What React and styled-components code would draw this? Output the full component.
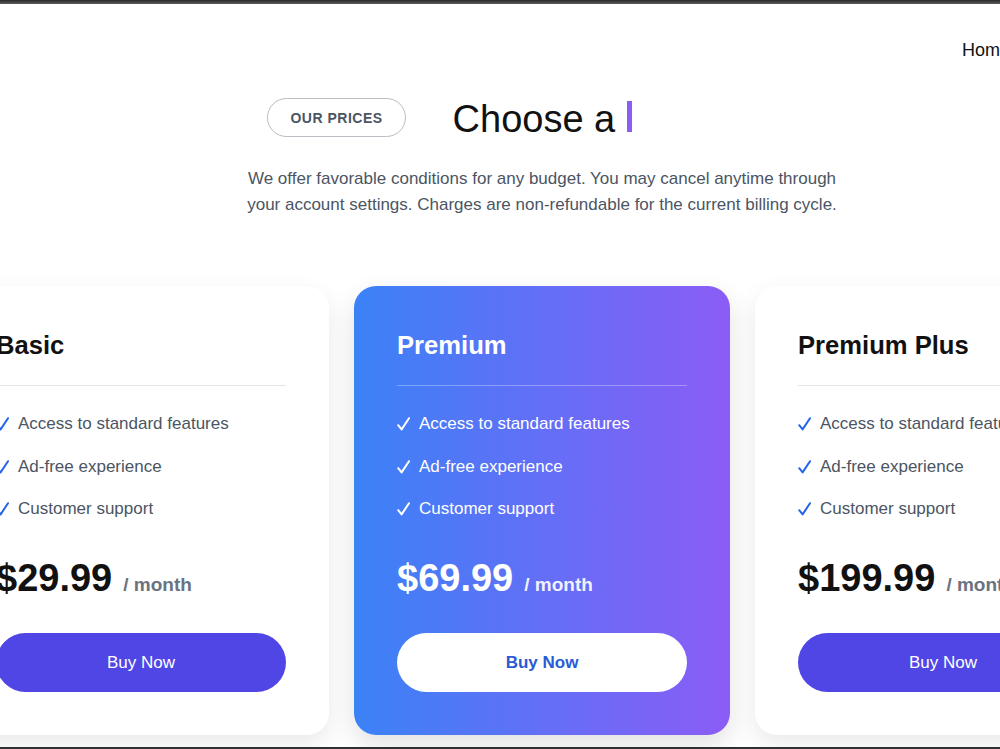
import styled, { createGlobalStyle } from "styled-components";

const GlobalStyle = createGlobalStyle`
    body {
        margin: 0;
        background: #ffffff;
        overflow: hidden;
        font-family: "Liberation Sans", Arial, sans-serif;
    }
`;

const plans = [
    { name: "Basic", price: "$29.99" },
    { name: "Premium", price: "$69.99", featured: true },
    { name: "Premium Plus", price: "$199.99" },
];

const features = ["Access to standard features", "Ad-free experience", "Customer support"];

function CheckMark() {
    return (
        <svg width="13" height="14" viewBox="0 0 13 14" fill="none">
            <path d="M1.2 8.2 L4.6 12.4 L12 1.2" stroke="currentColor" strokeWidth="2" strokeLinecap="round" strokeLinejoin="round" />
        </svg>
    );
}

export default function App() {
    return (
        <>
            <GlobalStyle />
            <Page>
                <TopEdge />
                <Stage>
                    <Header>
                        <Nav>
                            <NavLink>Home</NavLink>
                            <NavLink>Pricing</NavLink>
                            <NavLink>Contact</NavLink>
                        </Nav>
                    </Header>

                    <TitleRow>
                        <Badge>OUR PRICES</Badge>
                        <Heading>
                            {"Choose a "}
                            <Cursor />
                        </Heading>
                    </TitleRow>
                    <Lead>
                        We offer favorable conditions for any budget. You may cancel anytime through
                        your account settings. Charges are non-refundable for the current billing cycle.
                    </Lead>

                    <Cards>
                        {plans.map((plan) => (
                            <Card key={plan.name} $featured={plan.featured}>
                                <PlanName>{plan.name}</PlanName>
                                <Divider $featured={plan.featured} />
                                <Features>
                                    {features.map((f) => (
                                        <Feature key={f} $featured={plan.featured}>
                                            <Check $featured={plan.featured}>
                                                <CheckMark />
                                            </Check>
                                            {f}
                                        </Feature>
                                    ))}
                                </Features>
                                <PriceRow>
                                    <Price>{plan.price}</Price>
                                    <Period $featured={plan.featured}>/ month</Period>
                                </PriceRow>
                                <BuyButton $featured={plan.featured}>Buy Now</BuyButton>
                            </Card>
                        ))}
                    </Cards>
                </Stage>
                <BottomEdge />
            </Page>
        </>
    );
}

const Page = styled.div`
    width: 100vw;
    height: 100vh;
    overflow: hidden;
    display: flex;
    flex-direction: column;
`;

const TopEdge = styled.div`
    height: 4px;
    flex-shrink: 0;
    background: linear-gradient(#2a2a2a, #5a5a5a);
`;

const BottomEdge = styled.div`
    height: 2px;
    flex-shrink: 0;
    background: #2f3033;
`;

const Stage = styled.div`
    width: 1084px;
    flex: 1;
    display: flex;
    flex-direction: column;
    align-items: center;
`;

const Header = styled.header`
    align-self: stretch;
    padding: 36px 0 0 962px;
    height: 20px;
`;

const Nav = styled.nav`
    display: flex;
    gap: 32px;
    white-space: nowrap;
`;

const NavLink = styled.a`
    font-size: 18px;
    line-height: 20px;
    color: #111111;
`;

const TitleRow = styled.div`
    margin-top: 33px;
    display: flex;
    align-items: center;
    gap: 47px;
`;

const Badge = styled.div`
    height: 37px;
    padding: 0 22px;
    border: 1px solid #b9bcc2;
    border-radius: 999px;
    display: flex;
    align-items: center;
    font-size: 14px;
    font-weight: 700;
    letter-spacing: 0.5px;
    color: #4b5563;
`;

const Heading = styled.h1`
    width: 364px;
    margin: 3px 0 0;
    font-size: 38px;
    line-height: 46px;
    font-weight: 400;
    color: #111111;
    white-space: pre;
    display: flex;
    align-items: center;
`;

const Cursor = styled.span`
    width: 5px;
    height: 31px;
    margin-left: 1px;
    margin-top: -6px;
    background: #8b5cf6;
`;

const Lead = styled.p`
    width: 600px;
    margin: 24px 0 0;
    text-align: center;
    font-size: 17px;
    line-height: 26px;
    color: #4b5563;
`;

const Cards = styled.div`
    margin-top: 68px;
    align-self: stretch;
    display: flex;
    justify-content: center;
    gap: 25px;
`;

const Card = styled.div`
    flex-shrink: 0;
    width: 376px;
    box-sizing: border-box;
    padding: 43px;
    border-radius: 22px;
    background: ${(p) => (p.$featured ? "linear-gradient(90deg, #3b82f6, #8b5cf6)" : "#ffffff")};
    color: ${(p) => (p.$featured ? "#ffffff" : "#111111")};
    box-shadow: 0 10px 26px rgba(0, 0, 0, ${(p) => (p.$featured ? 0.12 : 0.09)});
`;

const PlanName = styled.h3`
    margin: 1px 0 0;
    font-size: 25.6px;
    line-height: 31px;
    font-weight: 700;
`;

const Divider = styled.div`
    height: 1px;
    margin-top: 24px;
    background: ${(p) => (p.$featured ? "rgba(255, 255, 255, 0.3)" : "#e2e4e8")};
`;

const Features = styled.ul`
    list-style: none;
    margin: 26px 0 0;
    padding: 0;
    display: flex;
    flex-direction: column;
    gap: 18.5px;
`;

const Feature = styled.li`
    display: flex;
    align-items: center;
    font-size: 17px;
    line-height: 24px;
    color: ${(p) => (p.$featured ? "#ffffff" : "#4b5563")};
`;

const Check = styled.span`
    display: flex;
    width: 13px;
    margin-right: 9px;
    color: ${(p) => (p.$featured ? "#ffffff" : "#2563eb")};
`;

const PriceRow = styled.div`
    margin-top: 34px;
    display: flex;
    align-items: baseline;
    gap: 11px;
`;

const Price = styled.span`
    font-size: 38px;
    line-height: 46px;
    font-weight: 700;
`;

const Period = styled.span`
    font-size: 19px;
    font-weight: 700;
    color: ${(p) => (p.$featured ? "rgba(255, 255, 255, 0.92)" : "#6b7280")};
`;

const BuyButton = styled.button`
    display: block;
    width: 100%;
    height: 59px;
    margin-top: 32px;
    border: none;
    border-radius: 999px;
    font-family: "Liberation Sans", Arial, sans-serif;
    font-size: 17px;
    font-weight: ${(p) => (p.$featured ? 700 : 400)};
    background: ${(p) => (p.$featured ? "#ffffff" : "#4f46e5")};
    color: ${(p) => (p.$featured ? "#2a5bd7" : "#ffffff")};
    cursor: pointer;
`;
